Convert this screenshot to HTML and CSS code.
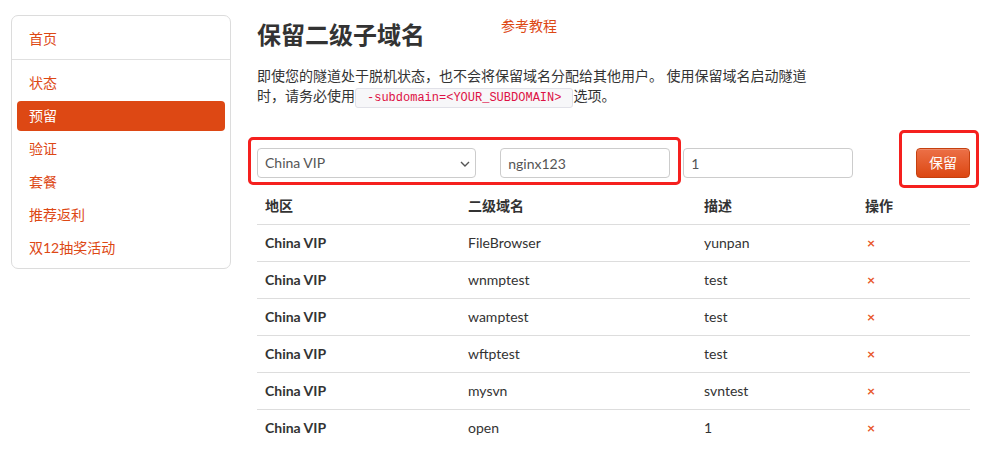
FILE: index.html
```html
<!DOCTYPE html>
<html lang="zh-CN">
<head>
<meta charset="utf-8">
<title>保留二级子域名</title>
<link rel="stylesheet" href="styles.css">
</head>
<body>
<div class="page">
  <nav class="sidebar">
    <a class="nav-item" href="#">首页</a>
    <div class="nav-divider"></div>
    <a class="nav-item" href="#">状态</a>
    <a class="nav-item active" href="#">预留</a>
    <a class="nav-item" href="#">验证</a>
    <a class="nav-item" href="#">套餐</a>
    <a class="nav-item" href="#">推荐返利</a>
    <a class="nav-item" href="#">双12抽奖活动</a>
  </nav>
  <main class="main">
    <div class="head">
      <h2 class="title">保留二级子域名</h2>
      <a class="tutorial" href="#">参考教程</a>
    </div>
    <p class="desc">即使您的隧道处于脱机状态，也不会将保留域名分配给其他用户。 使用保留域名启动隧道时，请务必使用<code class="code">-subdomain=&lt;YOUR_SUBDOMAIN&gt;</code>选项。</p>
    <div class="form-row">
      <div class="select">
        <span class="select-text">China VIP</span>
        <svg class="chev" width="10" height="6" viewBox="0 0 10 6"><path d="M1 1l4 4 4-4" fill="none" stroke="#555" stroke-width="1.4"/></svg>
      </div>
      <input class="input input-domain" type="text" value="nginx123">
      <input class="input input-desc" type="text" value="1">
      <button class="btn">保留</button>
      <div class="mark mark-a"></div>
      <div class="mark mark-b"></div>
    </div>
    <table class="table">
      <colgroup>
        <col class="c1"><col class="c2"><col class="c3"><col class="c4">
      </colgroup>
      <thead>
        <tr><th>地区</th><th>二级域名</th><th>描述</th><th>操作</th></tr>
      </thead>
      <tbody>
        <tr><td class="region">China VIP</td><td>FileBrowser</td><td>yunpan</td><td><a class="del" href="#">×</a></td></tr>
        <tr><td class="region">China VIP</td><td>wnmptest</td><td>test</td><td><a class="del" href="#">×</a></td></tr>
        <tr><td class="region">China VIP</td><td>wamptest</td><td>test</td><td><a class="del" href="#">×</a></td></tr>
        <tr><td class="region">China VIP</td><td>wftptest</td><td>test</td><td><a class="del" href="#">×</a></td></tr>
        <tr><td class="region">China VIP</td><td>mysvn</td><td>svntest</td><td><a class="del" href="#">×</a></td></tr>
        <tr><td class="region">China VIP</td><td>open</td><td>1</td><td><a class="del" href="#">×</a></td></tr>
      </tbody>
    </table>
  </main>
</div>
</body>
</html>
```

FILE: styles.css
```css
* { box-sizing: border-box; }
html, body { margin: 0; padding: 0; background: #fff; }
body {
  font-family: "Lato", "Noto Sans CJK SC", sans-serif;
  font-size: 14px;
  line-height: 20px;
  color: #333;
}
.page {
  display: flex;
  align-items: flex-start;
  padding: 15px 0 0 11px;
}
.sidebar {
  width: 220px;
  border: 1px solid #dcdcdc;
  border-radius: 7px;
  padding: 8px 5px 5px 5px;
  display: flex;
  flex-direction: column;
  gap: 3px;
}
.nav-item {
  display: block;
  height: 30px;
  line-height: 30px;
  padding: 0 12px;
  color: #dd4814;
  text-decoration: none;
  border-radius: 4px;
}
.nav-item.active {
  background: #dd4814;
  color: #fff;
}
.nav-divider {
  height: 1px;
  background: #e0e0e0;
  margin: 2px -5px 5px -5px;
}
.main {
  margin-left: 26px;
  width: 713px;
  position: relative;
}
.head {
  display: flex;
  align-items: flex-start;
}
.title {
  margin: 0;
  font-size: 24px;
  line-height: 40px;
  font-weight: 700;
  color: #333;
}
.tutorial {
  margin-left: 76px;
  line-height: 22px;
  color: #dd4814;
  text-decoration: none;
}
.desc {
  margin: 11px 0 1px;
  max-width: 560px;
  line-height: 20px;
}
.code {
  font-family: "Liberation Mono", monospace;
  font-size: 12px;
  line-height: 0;
  color: #dd1144;
  background: #f7f7f9;
  border: 1px solid #e1e1e8;
  border-radius: 3px;
  padding: 2px 11px 2px 11px;
}
.form-row {
  display: flex;
  align-items: center;
  margin-top: 42px;
  height: 30px;
  position: relative;
}
.select {
  width: 220px;
  height: 30px;
  border: 1px solid #cccccc;
  border-radius: 4px;
  display: flex;
  align-items: center;
  justify-content: space-between;
  padding: 0 5px 0 7px;
  color: #555;
}
.chev { margin-top: 1px; }
.input {
  height: 30px;
  border: 1px solid #cccccc;
  border-radius: 4px;
  padding: 0 7px;
  font: inherit;
  color: #555;
  outline: none;
}
.input-domain { width: 170px; margin-left: 24px; }
.input-desc { width: 170px; margin-left: 13px; }
.btn {
  margin-left: 63px;
  width: 54px;
  height: 30px;
  border: 1px solid #c5400f;
  border-radius: 4px;
  background: linear-gradient(#ec7047, #dc4712);
  color: #fff;
  font: inherit;
  padding: 0;
  box-shadow: inset 0 1px 0 rgba(255,255,255,0.2);
}
.mark {
  position: absolute;
  border: 3px solid #f5201e;
  border-radius: 5px;
  pointer-events: none;
}
.mark-a { left: -9px; top: -11px; width: 433px; height: 48px; }
.mark-b { left: 642px; top: -18px; width: 80px; height: 58px; }
.table {
  margin-top: 10px;
  width: 713px;
  border-collapse: collapse;
  table-layout: fixed;
}
.c1 { width: 203px; }
.c2 { width: 236px; }
.c3 { width: 161px; }
.c4 { width: 113px; }
.table th, .table td {
  text-align: left;
  padding: 8px 8px;
  line-height: 20px;
  vertical-align: middle;
}
.table th { font-weight: 700; }
.table td { border-top: 1px solid #dddddd; }
.region { font-weight: 700; }
.del {
  color: #e8572a;
  text-decoration: none;
  font-size: 14px;
  font-weight: 700;
  padding-left: 2px;
}
```
